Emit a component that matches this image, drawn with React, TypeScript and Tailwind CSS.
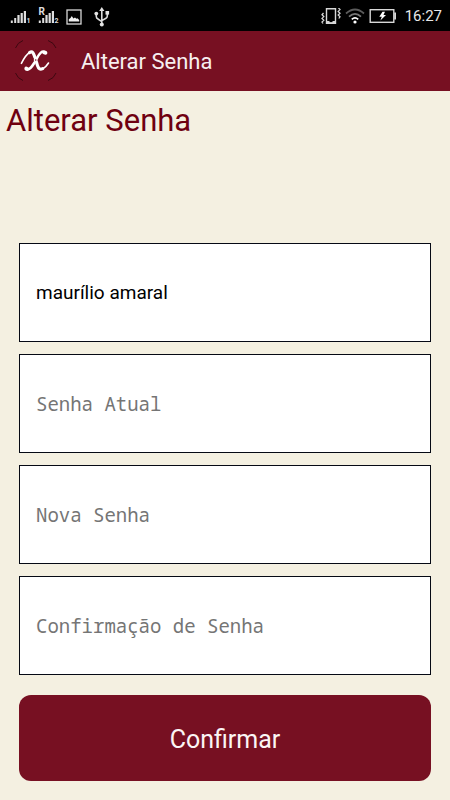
import { useState } from "react";

function SignalIcon({ slot, roaming = false }: { slot: string; roaming?: boolean }) {
  return (
    <svg className="h-5 w-5 overflow-visible" viewBox="0 0 20 20" fill="#dedede" aria-hidden="true">
      <rect x="0.8" y="13.5" width="2" height="2.5" />
      <rect x="4.2" y="11" width="2" height="5" />
      <rect x="7.4" y="8" width="2.2" height="8" />
      <rect x="10.6" y="6" width="2.2" height="10" />
      <rect x="13.8" y="4" width="2.2" height="12" />
      <text x="16.6" y="16" fontSize="7" fontWeight="700" fontFamily="Roboto, sans-serif">{slot}</text>
      {roaming && (
        <text x="0.6" y="8.2" fontSize="10" fontWeight="700" fontFamily="Roboto, sans-serif">R</text>
      )}
    </svg>
  );
}

function PictureIcon() {
  return (
    <svg className="h-4 w-4" viewBox="0 0 16 16" aria-hidden="true">
      <rect x="1" y="1" width="14" height="14" fill="none" stroke="#d8d8d8" strokeWidth="1.3" />
      <path d="M2.8 12.6V10.2L4.5 9L5.8 7L7.4 9.4L9 8.4L10.4 9.8L11.4 9.2L13.2 11V12.6Z" fill="#eee" />
    </svg>
  );
}

function UsbIcon() {
  return (
    <svg className="h-5 w-4" viewBox="0 0 16 20" fill="none" stroke="#dcdcdc" strokeWidth="1.6" aria-hidden="true">
      <path d="M7.8 2V17M2.3 7V9.5Q2.3 11.2 4 12L7.8 14.6M13.3 5.5V9Q13.3 10.5 12 11.2L7.8 13.6" />
      <path d="M7.8 0L10.4 4H5.2Z" fill="#e4e4e4" stroke="none" />
      <circle cx="7.8" cy="17.4" r="2" fill="#e4e4e4" stroke="none" />
      <circle cx="2.3" cy="6.6" r="1.9" fill="#e4e4e4" stroke="none" />
      <rect x="11.5" y="4" width="3.6" height="3.6" fill="#e4e4e4" stroke="none" />
    </svg>
  );
}

function VibrateIcon() {
  return (
    <svg className="h-4 w-5" viewBox="0 0 20 16" fill="none" stroke="#d8d8d8" aria-hidden="true">
      <path d="M5.5 .7H14.5V15.3H5.5Z" strokeWidth="1.4" />
      <path d="M5 13.8H8.5M11.5 13.8H15M5 15H15" strokeWidth="1.6" />
      <path d="M2.5 5L1 6.8L2.8 8.6L1 10.4L2.8 12.2L1 14L2 15.5M17.5 0L19 1.6L17.2 3.4L19 5.2L17.2 7L19 8.8L17.8 10.5" strokeWidth="1.3" />
    </svg>
  );
}

function WifiIcon() {
  return (
    <svg className="h-4 w-5" viewBox="0 0 20 16" fill="none" strokeWidth="1.7" aria-hidden="true">
      <path d="M1 5.5Q10 -2.5 19 5.5" stroke="#5c5c5c" />
      <path d="M4 8.6Q10 3 16 8.6" stroke="#777" />
      <path d="M6.8 11.4Q10 8.2 13.2 11.4" stroke="#fff" />
      <circle cx="10" cy="14" r="1.6" fill="#fff" />
    </svg>
  );
}

function BatteryIcon() {
  return (
    <svg className="h-4 w-7" viewBox="0 0 28 16" aria-hidden="true">
      <rect x="1.2" y="1.7" width="23.6" height="12.6" fill="none" stroke="#d8d8d8" strokeWidth="1.4" />
      <rect x="25.2" y="4.5" width="1.8" height="7" fill="#d8d8d8" />
      <path d="M13.5 3.8H16L14.5 7H17L11.4 12.4L12.8 8.7H10.3Z" fill="#fff" />
    </svg>
  );
}

function Logo() {
  return (
    <svg className="h-11 w-11" viewBox="0 0 44 44" fill="none" aria-hidden="true">
      <path d="M1.5 9Q3.5 3.5 9 1.5M34 1.5Q40 3.5 42 9M42 34Q40 39.5 34 41.5M9 41.5Q3.5 39.5 1.5 34" stroke="#3d0810" strokeWidth="1" />
      <g stroke="#fff" strokeLinecap="round">
        <path d="M7.4 24.4C9.5 20 12 15.5 16 13.2" strokeWidth="1.6" />
        <path d="M15.5 13.6C19 11.5 19.8 15 21 18.5" strokeWidth="3.2" />
        <path d="M22.6 23.5C23.6 28 25 31.4 28.6 29.6" strokeWidth="3.2" />
        <path d="M28.6 30C31.5 28.4 33 26.4 34.5 24" strokeWidth="1.6" />
        <path d="M31.5 13.2C28 11 25.5 14.5 22.8 19.4M20.6 23.4C18 27.5 15.5 31.8 12 30.2" strokeWidth="2.6" />
        <path d="M30.2 13.6L31.6 13.9M12.2 29.4L13.4 30" strokeWidth="3.6" />
      </g>
      <circle cx="21.7" cy="21" r="2" fill="#fff" />
      <circle cx="21.7" cy="21" r=".8" fill="#771022" />
    </svg>
  );
}

function StatusBar() {
  return (
    <div className="flex h-[31px] items-center bg-black pr-2 pl-2.5 text-[#e8e8e8]">
      <div className="flex items-center gap-2 pt-0.5">
        <SignalIcon slot="1" />
        <SignalIcon slot="2" roaming />
        <div className="flex items-center gap-3">
          <PictureIcon />
          <UsbIcon />
        </div>
      </div>
      <div className="ml-auto flex items-center gap-1 pt-px">
        <VibrateIcon />
        <WifiIcon />
        <BatteryIcon />
        <time className="pl-1 text-[15px] leading-5">16:27</time>
      </div>
    </div>
  );
}

const fieldBox =
  "block h-[99px] w-full rounded-none border border-[#050914] bg-white px-4 text-[19px] outline-none";

function PasswordField({ label }: { label: string }) {
  return (
    <input
      type="password"
      aria-label={label}
      placeholder={label}
      className={`${fieldBox} font-['Noto_Sans_Mono','Droid_Sans_Mono','DejaVu_Sans_Mono',monospace] text-black placeholder:text-[#757575]`}
    />
  );
}

export default function App() {
  const [user, setUser] = useState("maurílio amaral");

  return (
    <div className="min-h-screen bg-[#f4f0e1] font-['Roboto',sans-serif]">
      <StatusBar />
      <header className="flex h-[60px] items-center gap-[23px] bg-[#771022] px-3.5">
        <Logo />
        <span className="pt-0.5 text-[22px] leading-7 text-[#f7eff0]">Alterar Senha</span>
      </header>
      <main>
        <h1 className="px-1.5 pt-2 text-[31px] leading-[44px] text-[#6f0010]">Alterar Senha</h1>
        <form className="px-[19px] pt-[100px] pb-[19px]" onSubmit={(e) => e.preventDefault()}>
          <div className="flex flex-col gap-3">
            <input
              type="text"
              aria-label="Usuário"
              value={user}
              onChange={(e) => setUser(e.target.value)}
              className={`${fieldBox} text-black`}
            />
            <PasswordField label="Senha Atual" />
            <PasswordField label="Nova Senha" />
            <PasswordField label="Confirmação de Senha" />
          </div>
          <button
            type="submit"
            className="mt-5 block h-[86px] w-full rounded-xl bg-[#771022] pt-1 text-[25px] text-[#fbf5f5]"
          >
            Confirmar
          </button>
        </form>
      </main>
    </div>
  );
}
